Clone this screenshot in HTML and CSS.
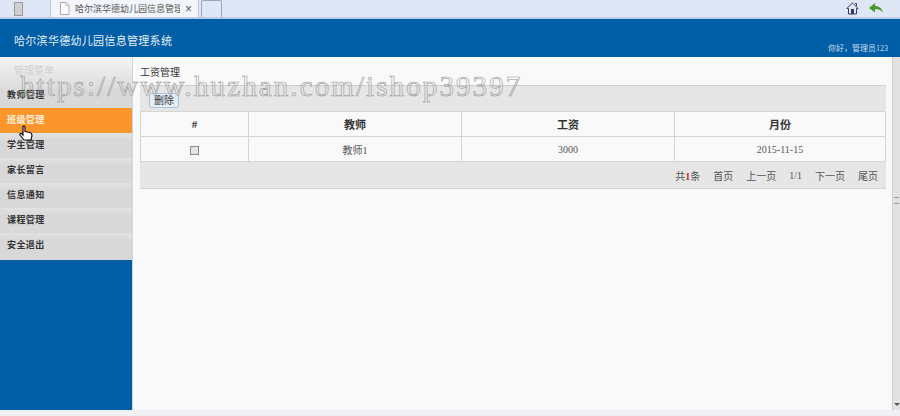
FILE: index.html
```html
<!DOCTYPE html>
<html lang="en">

<head>
    <meta charset="UTF-8">
    <meta name="viewport" content="width=device-width, initial-scale=1.0">
    <title>哈尔滨华德幼儿园信息管理系统</title>
    <link rel="stylesheet" href="styles.css">
</head>

<body>
    <!-- browser tab strip -->
    <div class="tab-bar">
        <div class="tab-side"><span class="phone-icon"></span></div>
        <div class="tab">
            <svg class="page-icon" width="11" height="13" viewBox="0 0 11 13">
                <path d="M1.5 .5h5.5l3 3v9h-8.500z" fill="#fff" stroke="#a9a9a9" />
                <path d="M7 .5v3h3" fill="none" stroke="#c4c4c4" />
            </svg>
            <span class="tab-title">哈尔滨华德幼儿园信息管理系统</span>
            <span class="tab-close">×</span>
        </div>
        <div class="tab-new"></div>
        <div class="tab-tools">
            <svg width="13" height="13" viewBox="0 0 13 13">
                <path d="M6.500 1L.8 6.500h1.700V12h8V6.500h1.700z" fill="#e8e8f0" stroke="#303a70" />
                <path d="M5 7h3v5H5z" fill="#2a3a70" />
                <path d="M9 1.500h1.500v2.500" fill="none" stroke="#303a70" />
            </svg>
            <svg width="14" height="11" viewBox="0 0 14 11">
                <path d="M0 5L6 0v3c4 0 7 2 8 7-2-3-4-4-8-4v3.500z" fill="#4a9a2a" />
            </svg>
        </div>
    </div>

    <div class="header">
        <h1>哈尔滨华德幼儿园信息管理系统</h1>
        <p>你好，管理员123</p>
    </div>

    <div class="page">
        <div class="sidebar">
            <div class="menu">
                <div class="menu-title">管理菜单</div>
                <a class="menu-item">教师管理</a>
                <a class="menu-item active">班级管理</a>
                <a class="menu-item">学生管理</a>
                <a class="menu-item">家长留言</a>
                <a class="menu-item">信息通知</a>
                <a class="menu-item">课程管理</a>
                <a class="menu-item">安全退出</a>
            </div>
        </div>

        <div class="content">
            <div class="crumb">工资管理</div>
            <div class="toolbar"><button class="del-btn">删除</button></div>
            <table>
                <thead>
                    <tr>
                        <th class="col-check">#</th>
                        <th class="col-wide">教师</th>
                        <th class="col-wide">工资</th>
                        <th>月份</th>
                    </tr>
                </thead>
                <tbody>
                    <tr>
                        <td><span class="checkbox"></span></td>
                        <td>教师1</td>
                        <td>3000</td>
                        <td>2015-11-15</td>
                    </tr>
                </tbody>
            </table>
            <div class="pager">
                <span>共<b>1</b>条</span>
                <span>首页</span>
                <span>上一页</span>
                <span>1/1</span>
                <span>下一页</span>
                <span>尾页</span>
            </div>
        </div>

        <div class="scrollbar">
            <span class="grip"></span>
            <span class="arrow-down"></span>
        </div>
    </div>

    <div class="status-bar"></div>

    <!-- watermark and mouse pointer lie over the page -->
    <div class="watermark">https://www.huzhan.com/ishop39397</div>
    <svg class="cursor" width="14" height="17" viewBox="0 0 14 17">
        <path d="M4 1.500c1-1 2 0 2 1v4l5 1c1.500.5 2 1 2 3l-1 4.500H5L1 10c-.5-1 .5-2 1.500-1.500L4 10z" fill="#fff" stroke="#111" stroke-width="1.200" />
    </svg>
</body>

</html>
```

FILE: styles.css
```css
/* whole page */
html,
body {
    height: 100%;
}

body {
    margin: 0;
    height: 416px;
    overflow: hidden;
    position: relative;
    display: flex;
    flex-direction: column;
    background-color: #f9f9f9;
    font-family: "Liberation Serif", "Noto Sans CJK SC", serif;
    font-size: 10px;
    color: #444;
}

/* tab strip */
.tab-bar {
    height: 17px;
    display: flex;
    flex-shrink: 0;
    background-color: #dfe6f5;
    border-bottom: 2px solid #b9cbe6;
}

.tab-side {
    width: 34px;
    display: flex;
    align-items: center;
    padding-left: 14px;
}

.phone-icon {
    width: 7px;
    height: 12px;
    background-color: #cfcfcf;
    border: 1px solid #9a9a9a;
}

.tab {
    width: 149px;
    margin-left: 2px;
    display: flex;
    align-items: center;
    gap: 5px;
    padding-left: 8px;
    box-sizing: border-box;
    background-color: #f2f5fb;
    border-left: 1px solid #b9cbe6;
    border-right: 1px solid #b9cbe6;
}

.tab-title {
    width: 105px;
    overflow: hidden;
    white-space: nowrap;
    font-size: 9px;
    color: #555;
}

.tab-close {
    font-family: "Liberation Sans", sans-serif;
    font-size: 12px;
    color: #555;
}

.tab-new {
    width: 19px;
    margin-left: 2px;
    border: 1px solid #9aa6bb;
    border-bottom: 0;
    border-radius: 2px 2px 0 0;
}

.tab-tools {
    margin-left: auto;
    display: flex;
    align-items: center;
    gap: 10px;
    padding-right: 17px;
}

/* blue header */
.header {
    height: 38px;
    flex-shrink: 0;
    display: flex;
    justify-content: space-between;
    background-color: #005ea6;
    color: #e6eef6;
}

.header h1 {
    margin: 15px 0 0 14px;
    font-size: 11px;
    line-height: 14px;
    font-weight: normal;
    letter-spacing: .3px;
}

.header p {
    margin: 24px 12px 0 0;
    font-size: 8px;
    line-height: 12px;
    color: #c9dcec;
}

.page {
    height: 353px;
    flex-shrink: 0;
    display: flex;
}

/* left menu */
.sidebar {
    width: 132px;
    flex-shrink: 0;
    background-color: #005ea6;
    border-right: 1px solid #c9d9e8;
}

.menu {
    height: 203px;
    background-color: #d8d8d8;
}

.menu-title {
    height: 26px;
    padding: 7px 0 0 14px;
    box-sizing: border-box;
    background: linear-gradient(#f4f4f4, #e0e0e0);
    font-size: 10px;
    line-height: 14px;
    color: #d0d0d0;
}

.menu-item {
    display: block;
    height: 25px;
    padding-left: 7px;
    font-size: 9px;
    line-height: 25px;
    font-weight: bold;
    letter-spacing: .4px;
    color: #333;
    background: linear-gradient(#e2e2e2, #d8d8d8 30%);
}

.menu-item.active {
    background: #fb962d;
    color: #fff3e0;
}

/* main area */
.content {
    flex: 1;
    min-width: 0;
    padding: 0 6px 0 7px;
}

.crumb {
    height: 28px;
    padding-top: 9px;
    box-sizing: border-box;
    font-size: 10px;
    line-height: 13px;
    color: #333;
}

.toolbar {
    height: 26px;
    padding: 7px 0 0 9px;
    box-sizing: border-box;
    background-color: #e6e6e6;
    border-top: 1px solid #cfcfcf;
}

.del-btn {
    display: block;
    width: 30px;
    height: 15px;
    padding: 0;
    background-color: #e4eef8;
    border: 1px solid #a9c4dc;
    border-radius: 2px;
    font-family: inherit;
    font-size: 10px;
    line-height: 13px;
    color: #333;
}

table {
    width: 100%;
    table-layout: fixed;
    border-collapse: collapse;
    background-color: #f9f9f9;
}

th,
td {
    height: 24px;
    padding: 0;
    text-align: center;
    border: 1px solid #d6d6d6;
    font-size: 10px;
    color: #555;
}

th {
    font-size: 11px;
    color: #333;
}

.col-check {
    width: 107px;
}

.col-wide {
    width: 212px;
}

.checkbox {
    display: inline-block;
    width: 7px;
    height: 7px;
    vertical-align: middle;
    background-color: #e4e4e4;
    border: 1px solid #8a8a8a;
}

.pager {
    height: 26px;
    display: flex;
    justify-content: flex-end;
    align-items: center;
    gap: 13px;
    padding-right: 8px;
    background-color: #e6e6e6;
    border-bottom: 1px solid #d0d0d0;
    font-size: 10px;
    color: #555;
}

.pager b {
    color: #c8282d;
}

/* right scrollbar */
.scrollbar {
    width: 8px;
    flex-shrink: 0;
    position: relative;
    background-color: #e2e2e2;
    border-left: 1px solid #cfcfcf;
    box-sizing: border-box;
}

.grip {
    display: block;
    height: 5px;
    margin: 140px 1px 0;
    border-top: 1px solid #999;
    border-bottom: 1px solid #999;
}

.arrow-down {
    position: absolute;
    left: 1px;
    bottom: 4px;
    border-top: 3px solid #555;
    border-left: 3px solid transparent;
    border-right: 3px solid transparent;
}

.status-bar {
    flex: 1;
    background-color: #eef0f4;
}

/* overlays */
.watermark {
    position: absolute;
    left: 20px;
    top: 68px;
    font-family: "Liberation Serif", serif;
    font-size: 29px;
    line-height: 36px;
    letter-spacing: 2.100px;
    white-space: nowrap;
    color: transparent;
    -webkit-text-stroke: .6px #9a9a9a;
}

.cursor {
    position: absolute;
    left: 19px;
    top: 125px;
}
```
